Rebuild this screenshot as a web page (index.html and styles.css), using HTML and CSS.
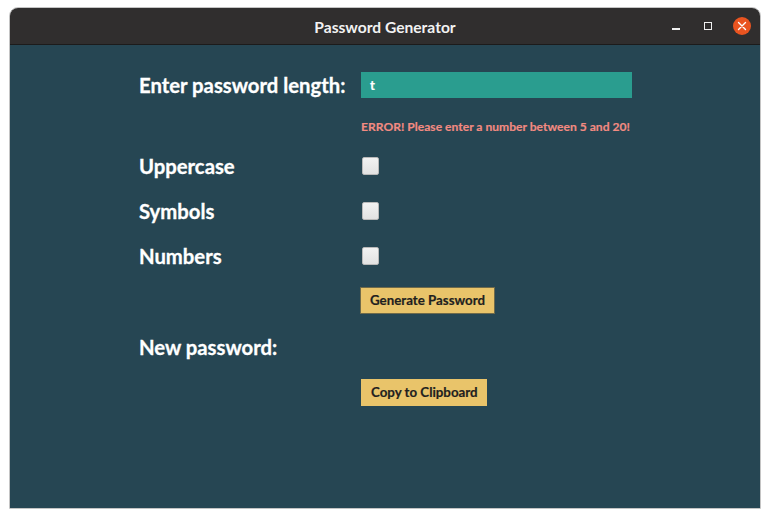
FILE: index.html
```html
<!DOCTYPE html>
<html>
<head>
<meta charset="utf-8">
<title>Password Generator</title>
<link rel="stylesheet" href="styles.css">
</head>
<body>
<div class="window">
  <div class="titlebar">
    <div class="title">Password Generator</div>
    <div class="controls">
      <span class="ctl min"><span class="min-line"></span></span>
      <span class="ctl max"><span class="max-box"></span></span>
      <span class="ctl close">
        <svg width="18" height="18" viewBox="0 0 18 18"><path d="M5.5 5.5 L12.5 12.5 M12.5 5.5 L5.5 12.5" stroke="#fff" stroke-width="1.4" stroke-linecap="round"/></svg>
      </span>
    </div>
  </div>
  <div class="content">
    <div class="row r-entry">
      <div class="label">Enter password length:</div>
      <div class="entry">t</div>
    </div>
    <div class="row r-error">
      <div class="label"></div>
      <div class="error">ERROR! Please enter a number between 5 and 20!</div>
    </div>
    <div class="row r-check r-first">
      <div class="label">Uppercase</div>
      <div class="checkbox"></div>
    </div>
    <div class="row r-check">
      <div class="label">Symbols</div>
      <div class="checkbox"></div>
    </div>
    <div class="row r-check">
      <div class="label">Numbers</div>
      <div class="checkbox"></div>
    </div>
    <div class="row r-gen">
      <div class="label"></div>
      <div class="button gen">Generate Password</div>
    </div>
    <div class="row r-new">
      <div class="label">New password:</div>
    </div>
    <div class="row r-copy">
      <div class="label"></div>
      <div class="button">Copy to Clipboard</div>
    </div>
  </div>
</div>
</body>
</html>
```

FILE: styles.css
```css
html, body {
  margin: 0;
  padding: 0;
  background: #ffffff;
}
body {
  width: 770px;
  height: 518px;
  overflow: hidden;
  font-family: Lato, "Noto Sans", sans-serif;
}
.window {
  margin: 7px 0 0 9px;
  width: 750px;
  border: 1px solid #c4c4c4;
  border-radius: 9px 9px 0 0;
  overflow: hidden;
}
.titlebar {
  height: 36px;
  background: #302e2e;
  border-bottom: 1px solid #1c1b1b;
  display: flex;
  align-items: center;
  justify-content: center;
  position: relative;
}
.title {
  color: #f2f2f2;
  font-weight: 700;
  font-size: 15.6px;
  font-family: Lato, "Noto Sans", sans-serif;
  margin-top: 1px;
}
.controls {
  position: absolute;
  right: 9px;
  top: 0;
  height: 36px;
  display: flex;
  align-items: center;
  gap: 12px;
}
.ctl {
  width: 20px;
  height: 20px;
  display: flex;
  align-items: center;
  justify-content: center;
}
.min-line {
  width: 8px;
  height: 1.5px;
  background: #f0f0f0;
  margin-top: 6px;
}
.max-box {
  width: 6px;
  height: 6px;
  border: 1.5px solid #f0f0f0;
}
.close {
  width: 18px;
  height: 18px;
  border-radius: 50%;
  background: #e95420;
  margin-left: 3px;
}
.close svg { display: block; }
.content {
  height: 463px;
  background: #264653;
  padding: 27px 0 0 129px;
  box-sizing: border-box;
  display: flex;
  flex-direction: column;
}
.row {
  display: flex;
  align-items: center;
}
.label {
  width: 222px;
  flex: none;
  color: #ffffff;
  font-weight: 700;
  font-size: 20.3px;
  -webkit-text-stroke: 0.3px #ffffff;
}
.r-entry { height: 26px; }
.entry {
  width: 271px;
  height: 26px;
  background: #2a9d8f;
  color: #ffffff;
  font-weight: 700;
  font-size: 13px;
  line-height: 26px;
  padding-left: 9px;
  box-sizing: border-box;
  -webkit-text-stroke: 0.2px #ffffff;
}
.r-error { height: 16px; margin-top: 20px; }
.error {
  color: #f28b82;
  font-weight: 700;
  font-size: 12.1px;
  -webkit-text-stroke: 0.15px #f28b82;
}
.r-check { height: 18px; margin-top: 27px; }
.r-check.r-first { margin-top: 23px; }
.checkbox {
  width: 17px;
  height: 18px;
  box-sizing: border-box;
  border: 1px solid #b9b9b9;
  border-radius: 2px;
  background: linear-gradient(#f2f2f2, #e2e2e2);
  margin-left: 1px;
}
.r-gen { height: 27px; margin-top: 22px; }
.button {
  background: #e9c46a;
  color: #1f1f1f;
  font-weight: 700;
  font-size: 13.3px;
  height: 27px;
  line-height: 27px;
  padding: 0 9px 0 10px;
  box-sizing: border-box;
  -webkit-text-stroke: 0.2px #1f1f1f;
}
.button.gen {
  border: 1px solid #6f6a4a;
  line-height: 25px;
  padding: 0 9px 0 9px;
  margin-left: -1px;
}
.r-new { height: 24px; margin-top: 21px; }
.r-copy { height: 27px; margin-top: 20px; }
```
